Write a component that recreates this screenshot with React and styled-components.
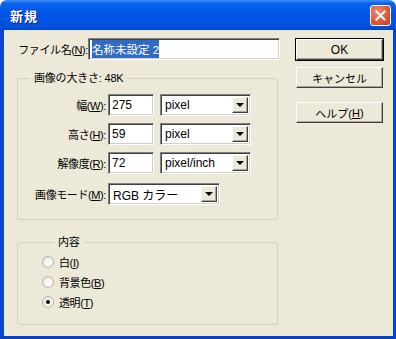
import React from 'react';
import styled, { createGlobalStyle } from 'styled-components';

const GlobalStyle = createGlobalStyle`
  html, body {
    margin: 0;
    padding: 0;
    background: #ffffff;
  }
  body {
    font-family: "Liberation Sans", "Noto Sans CJK JP", sans-serif;
    font-size: 12px;
    color: #000;
  }
`;

const Window = styled.div`
  width: 396px;
  height: 339px;
  display: flex;
  flex-direction: column;
  box-sizing: border-box;
`;

const TitleBar = styled.div`
  height: 30px;
  flex-shrink: 0;
  display: flex;
  align-items: center;
  justify-content: space-between;
  padding: 0 5px 0 10px;
  border-radius: 7px 7px 0 0;
  background: linear-gradient(
    to bottom,
    #3d8ff7 0%,
    #0a62ec 12%,
    #0055e5 45%,
    #0052e0 85%,
    #0045cc 100%
  );
`;

const Title = styled.span`
  color: #fff;
  font-family: "Noto Sans CJK JP", sans-serif;
  font-weight: 700;
  font-size: 13px;
  text-shadow: 1px 1px 0 #0a1e80;
  letter-spacing: 1px;
`;

const CloseButton = styled.div`
  width: 19px;
  height: 19px;
  border: 1px solid #fff;
  border-radius: 3px;
  background: radial-gradient(circle at 35% 30%, #f08a6c 0%, #e05a3a 55%, #c43d1e 100%);
  display: flex;
  align-items: center;
  justify-content: center;
`;

const Frame = styled.div`
  flex: 1;
  background: #ece9d8;
  border-left: 4px solid #0845d6;
  border-right: 3px solid #0845d6;
  border-bottom: 3px solid #0840c8;
  display: grid;
  grid-template-columns: 292px 87px;
  align-items: start;
`;

const MainColumn = styled.div`
  display: flex;
  flex-direction: column;
  padding: 8px 0 0 13px;
`;

const FileRow = styled.div`
  display: flex;
  align-items: center;
`;

const Label = styled.span`
  flex-shrink: 0;
  font-size: 11px;
  letter-spacing: -0.4px;
  white-space: nowrap;
  width: ${(p) => (p.$w ? `${p.$w}px` : 'auto')};
  text-align: ${(p) => (p.$right ? 'right' : 'left')};
`;

const TextBox = styled.div`
  box-sizing: border-box;
  width: ${(p) => p.$w}px;
  height: 22px;
  background: #fff;
  border-top: 1px solid #808080;
  border-left: 1px solid #808080;
  border-right: 1px solid #fff;
  border-bottom: 1px solid #fff;
  box-shadow: inset 1px 1px 0 #404040, inset -1px -1px 0 #d4d0c8;
  display: flex;
  align-items: center;
  padding-left: 3px;
  white-space: nowrap;
`;

const Selected = styled.span`
  background: #316ac5;
  color: #fff;
  padding: 1px 0;
  font-size: 11.5px;
`;

const Group = styled.fieldset`
  margin: ${(p) => p.$top}px 0 0 0;
  width: 261px;
  box-sizing: border-box;
  border: 1px solid #d0d0bf;
  border-radius: 3px;
  padding: ${(p) => p.$pad};
  min-width: 0;
`;

const Legend = styled.legend`
  margin-left: 12px;
  padding: 0 4px;
  line-height: 14px;
  font-size: 11px;
  letter-spacing: -0.2px;
`;

const Rows = styled.div`
  display: flex;
  flex-direction: column;
  gap: 7px;
`;

const Row = styled.div`
  display: flex;
  align-items: center;
  gap: 2px;
  margin-top: ${(p) => p.$top || 0}px;
`;

const SelectBox = styled.div`
  box-sizing: border-box;
  width: ${(p) => p.$w}px;
  height: 22px;
  margin-left: ${(p) => p.$ml || 0}px;
  background: #fff;
  border-top: 1px solid #808080;
  border-left: 1px solid #808080;
  border-right: 1px solid #fff;
  border-bottom: 1px solid #fff;
  box-shadow: inset 1px 1px 0 #404040, inset -1px -1px 0 #d4d0c8;
  display: flex;
  align-items: center;
  justify-content: space-between;
  padding: 2px 2px 2px 4px;
  white-space: nowrap;
`;

const DropButton = styled.div`
  width: 16px;
  height: 16px;
  box-sizing: border-box;
  background: #ece9d8;
  border-top: 1px solid #fff;
  border-left: 1px solid #fff;
  border-right: 1px solid #404040;
  border-bottom: 1px solid #404040;
  box-shadow: inset -1px -1px 0 #aca899;
  display: flex;
  align-items: center;
  justify-content: center;
`;

const Arrow = styled.span`
  width: 0;
  height: 0;
  border-left: 4px solid transparent;
  border-right: 4px solid transparent;
  border-top: 4px solid #000;
`;

const RadioList = styled.div`
  display: flex;
  flex-direction: column;
`;

const RadioRow = styled.div`
  height: 20px;
  display: flex;
  align-items: center;
  gap: 5px;
`;

const RadioCircle = styled.span`
  width: 12px;
  height: 12px;
  box-sizing: border-box;
  border-radius: 50%;
  border: 1px solid #b5b3a8;
  background: radial-gradient(circle at 65% 65%, #ffffff 0%, #f4f3ee 50%, #dcdad0 100%);
  display: flex;
  align-items: center;
  justify-content: center;
  &::after {
    content: '';
    width: 4px;
    height: 4px;
    border-radius: 50%;
    background: ${(p) => (p.$on ? '#000' : 'transparent')};
  }
`;

const ButtonColumn = styled.div`
  display: flex;
  flex-direction: column;
  padding-top: 9px;
`;

const Button = styled.div`
  box-sizing: border-box;
  height: 21px;
  margin-top: ${(p) => p.$top || 0}px;
  background: #ece9d8;
  border-top: 1px solid #fff;
  border-left: 1px solid #fff;
  border-right: 1px solid #404040;
  border-bottom: 1px solid #404040;
  box-shadow: inset -1px -1px 0 #aca899
    ${(p) => (p.$default ? ', 0 0 0 1px #000' : '')};
  display: flex;
  align-items: center;
  justify-content: center;
  font-size: ${(p) => (p.$ja ? 11 : 12)}px;
`;

const Key = ({ k }) => (
  <>
    (<u>{k}</u>)
  </>
);

const Select = ({ w, ml, value }) => (
  <SelectBox $w={w} $ml={ml}>
    <span>{value}</span>
    <DropButton>
      <Arrow />
    </DropButton>
  </SelectBox>
);

const sizeRows = [
  { label: '幅', key: 'W', value: '275', unit: 'pixel' },
  { label: '高さ', key: 'H', value: '59', unit: 'pixel' },
  { label: '解像度', key: 'R', value: '72', unit: 'pixel/inch' },
];

const contents = [
  { label: '白', key: 'I', on: false },
  { label: '背景色', key: 'B', on: false },
  { label: '透明', key: 'T', on: true },
];

const App = () => {
  return (
    <>
      <GlobalStyle />
      <Window>
        <TitleBar>
          <Title>新規</Title>
          <CloseButton>
            <svg width="11" height="11" viewBox="0 0 11 11">
              <path d="M1.5 1.5 L9.5 9.5 M9.5 1.5 L1.5 9.5" stroke="#fff" strokeWidth="2" strokeLinecap="square" />
            </svg>
          </CloseButton>
        </TitleBar>
        <Frame>
          <MainColumn>
            <FileRow>
              <Label $w={71} $right>
                ファイル名<Key k="N" />:
              </Label>
              <TextBox $w={192}>
                <Selected>名称未設定 2</Selected>
              </TextBox>
            </FileRow>

            <Group $top={11} $pad="9px 0 14px 0">
              <Legend>画像の大きさ: 48K</Legend>
              <Rows>
                {sizeRows.map((r) => (
                  <Row key={r.key}>
                    <Label $w={88} $right>
                      {r.label}
                      <Key k={r.key} />:
                    </Label>
                    <TextBox $w={46}>{r.value}</TextBox>
                    <Select w={91} ml={4} value={r.unit} />
                  </Row>
                ))}
              </Rows>
              <Row $top={9}>
                <Label $w={88} $right>
                  画像モード<Key k="M" />:
                </Label>
                <Select w={112} value="RGB カラー" />
              </Row>
            </Group>

            <Group $top={15} $pad="3px 0 12px 24px">
              <Legend>内容</Legend>
              <RadioList>
                {contents.map((c) => (
                  <RadioRow key={c.key}>
                    <RadioCircle $on={c.on} />
                    <Label>
                      {c.label}
                      <Key k={c.key} />
                    </Label>
                  </RadioRow>
                ))}
              </RadioList>
            </Group>
          </MainColumn>

          <ButtonColumn>
            <Button $default>OK</Button>
            <Button $top={7} $ja>
              キャンセル
            </Button>
            <Button $top={14} $ja>
              ヘルプ<Key k="H" />
            </Button>
          </ButtonColumn>
        </Frame>
      </Window>
    </>
  );
};

export default App;
